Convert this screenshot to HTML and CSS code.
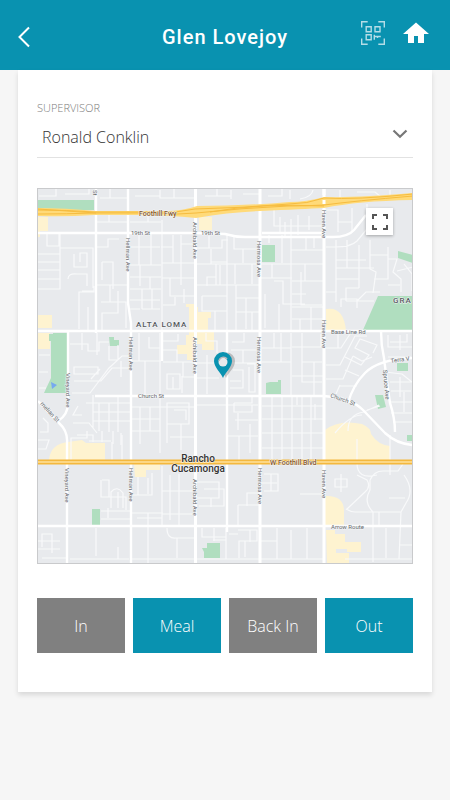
FILE: index.html
```html
<!DOCTYPE html>
<html lang="en">
<head>
<meta charset="utf-8">
<meta name="viewport" content="width=device-width, initial-scale=1">
<title>Glen Lovejoy</title>
<link rel="stylesheet" href="styles.css">
</head>
<body>
<header class="topbar">
  <button class="icon-button back" type="button" aria-label="Back">
    <svg width="14" height="22" viewBox="0 0 14 22"><path d="M12 1.5 2.5 11 12 20.5" fill="none" stroke="#fff" stroke-width="2"/></svg>
  </button>
  <h1 class="title">Glen Lovejoy</h1>
  <div class="actions">
    <button class="icon-button" type="button" aria-label="Scan code">
      <svg width="26" height="26" viewBox="0 0 26 26" fill="none" stroke="#b5dde7" stroke-width="1.4">
        <path d="M1.7 7.5V1.7h6M18.300 1.700h6v5.800M24.300 18.500v5.800h-6M7.700 24.300h-6v-5.800"/>
        <path d="M6.200 6.700h5v5h-5zM15 6.700h5v5h-5zM6.200 14.700h5v5h-5zM14.300 14.700v5M14.300 16.500h6.500M17.500 16.500v1.500"/>
      </svg>
    </button>
    <button class="icon-button" type="button" aria-label="Home">
      <svg width="26" height="22" viewBox="0 0 26 22"><path d="M13 .5 0 12h5v9h6v-7h4v7h6v-9h5z" fill="#fff"/></svg>
    </button>
  </div>
</header>
<main class="card">
  <div class="field">
    <label class="field-label" for="supervisor">SUPERVISOR</label>
    <div class="select-row">
      <select id="supervisor" class="select"><option>Ronald Conklin</option></select>
      <svg class="chevron" width="16" height="10" viewBox="0 0 16 10"><path d="m1.500 1.500 6.500 6.300 6.500-6.300" fill="none" stroke="#777" stroke-width="2.200"/></svg>
    </div>
  </div>
  <section class="map" aria-label="Map">
    <svg class="map-art" viewBox="38 189 374 374">
      <rect x="38" y="189" width="374" height="374" fill="#e8eaed"/>
      <g fill="#fef3d0">
        <path d="M38 217h10v14h-8v6h-2zM199 217h13v13h-13zM38 315h14v13H38zM38 333h12v16H38zM189 307h9v5h13v6h-3v13h6v19h-12v-6h-7v16h-8v-6h-10v-9h9v-10h3zM326 309q18-3 20 22h-20zM49 459q2-15 19-17l14-2 4 3h19v17H49zM134 464h26v6h-14v7h-11zM325 430q14-11 37-6 9 4 9 10 7 11 19 12v16h-65zM325 496q19-1 19 15v16h-19zM326 530h9v4h10v8h16v10h-14v-3h-11v4h13v11h-22zM186 307h8v-3h-8z"/>
      </g>
      <g fill="#b0debf">
        <path d="M38 200h56v10H38zM262 245h13v17h-13zM53 333h14v60H44l7-15v-37h-2v-7h4zM109 337h5v3h5v6h-9zM270 382h8v-2h3v14h-15v-11zM398 251l15 4v8l-15-5zM378 296h35v34h-50zM397 363h11v8h-11zM375 395h8l3 12-8 2zM92 509h8v16h-8zM207 543h13v15h-16v-6l-2-4h5zM407 435h6v6h-6z"/>
      </g>
      <path d="m51 382 6 3-5 4z" fill="#76a9ef"/>
      <g fill="none" stroke="#f8f9fa" stroke-width="1.200">
        <path d="M39 196h17v-7M65 194h24v-5M100 198h28M110 189v9M135 196h25M160 190v8h35M174 198v-9M205 196h12v-7M217 196h14M231 190v9M243 194h17M268 196h14v-7M290 190v9M300 199q12-2 13-9M340 199v-9M357 192h18l6 5M390 197v-7"/>
        <path d="M47 234v12h12v-12M47 246h13M38 254h22M60 248h33v40M60 234v13M60 246v43H38M38 262h22M38 270h22M38 279h22M74 254v13h13v-14h-7v9M68 279q0-6 9-5h10v12M39 289h21M79 302v-10h15v-6M79 302v27M88 307v24M94 291h-12M96 222h13v-9M109 222h19M97 247h11v-8h11M102 262h11v27M102 262v18M97 285h31M110 285v17h16v26M110 302h-9M118 291v22h-16v18"/>
        <path d="M130 222h18v-8M148 222h13M139 233v32h21M151 233v32M130 247h30M130 265h31M140 265v21M130 277h31M150 277v12h11M130 289h31M142 289v20M142 309h18M130 309h10M152 289v20M130 300h30M162 220v110M173 235v28M161 247h12M181 235v29M181 244h13M162 263h33M181 264v21M162 278h33M170 278v18h24M184 289v14M163 305h12v-8"/>
        <path d="M197 248h12v-12M209 248h13v-8h6M211 249v15M211 262h16M216 264v21h10M216 277h-9v9M220 265v20M227 235v99M196 264h64M234 235v14h9v14M243 249h17M252 264v20M235 264v20M196 285h64M202 296h25M202 296v15h13v20M215 311h12M236 285v45M236 298h24M246 298v31M236 312h24M252 312v18M269 235v8M280 217v16M291 219v111M282 235v28M261 264h31M272 264v14h20M261 278h31M274 281h9v23h22M292 294h14M265 294v34M279 304v27M291 250h15v-12M306 250h17M292 264h31M305 264v17h18M292 281h31M314 236v12M301 272v33h21M292 307h31M311 307v23M292 319h31M300 319v12"/>
        <path d="M274 209v17h50M285 222v14M298 215v20M309 216v14M326 210h12v22M338 222h14v-14M352 222v10M326 247h9q16 0 22-6l10-12V204M336 240v52M347 240v28M359 245v43M336 260h30M336 268h38M336 279h23M359 288h-13v13M326 292h10v10M346 301h28M370 240v29l6 3-3 21M370 255h18M388 247v32h-14M388 259h9l-4 13 8 7v13M397 271l16-4M388 285h12M404 264l8 10v17M341 307v-8h16v9M357 301l9-9h14"/>
        <path d="M39 355h11M39 372h9M39 388h7M70 344h18v7h11v-9h10M82 333v17M97 333v22M109 346v14h9v-15M74 367h24v7H74zM74 381h27l11-13h18M72 393h18l19-25 13-12h8M86 403h44M93 395v34M99 403v28M109 403v29M118 396v36M93 412h37M93 421h37M82 415h-9l5-9M73 423h16l8 10M77 435h16v7M40 432h8v-9l-5-5M38 440h11l-3 9h-8M121 433v12M102 442v-11M113 431v13M121 377v-16M100 369l-9 10M139 333v28h20M131 361h30M145 361v34M160 333v62M149 337v11h11"/>
        <path d="M132 407h18v24h10M140 407v37M150 407h45M160 397v56M167 403h22v21h-22zM174 410h12v10M167 424v19M181 424v26M132 419h28M132 431h28M170 437h25M163 341h15v-7M163 350h14v12h17M163 362h20v15h12M167 374h13v15h-13zM173 377v12M182 376v17M197 363h20v-8M197 378h22M207 355v39M197 405h61M227 333v129M206 333v8h11v12M232 342h12v-9M231 350h28M243 350v13h16M230 363h27M233 370h10v18h-13M247 364h8v28h-6v-25M230 381h11M234 403h18v-8M234 403v9h18v-7M235 420h23M238 413v17M228 436h30M239 436v26M250 424v29"/>
        <path d="M262 348h12v-15M262 362h29v34M273 348h18M281 333v29M291 333v62M302 333v14h19v-13M292 347h31M302 347v15h20M302 362v20h20M292 376h31M314 362v33M262 406h61M262 419h61M272 397v65M282 397v65M292 397v65M302 397v65M262 433h61M262 448h61M311 397v65M297 405v-9M315 404v16"/>
        <path d="M326 348h15l9-14M338 333v15M326 365h14l15-29h12M345 357l16 8 8-10-14-7 5-9 17 6-4 8M326 379h17l10-23M353 356l9 5 10-4M339 386h18M345 370l14 6M335 396l5-11M341 397l8 4M388 335v12h24M400 335v15M390 342h17v-8M388 357h23M390 382h22M391 391h20M400 377v20M391 402h22M404 392v20M391 413h22M385 372l17 2 10 8M393 422h19M367 410l13-4M348 431q0-17 16-19l15-7M335 433q15-18 27-18"/>
        <path d="M71 462v-24h16v-7M89 441h22M112 442v20M122 462v-27M102 480h7v17h-8v-17M106 497h20v13M111 508v-16q6-7 12 1v15M101 511h29M101 519h29M108 508v10M118 492v16M131 495h21v-22M138 477v18M148 478v16M131 513h32M137 518h25M148 513v50M42 547v-13h10v19M38 541h22M38 549h22M42 558h24M96 528v28M118 559v-12M70 559h59M131 559h64"/>
        <path d="M162 466v60M170 475v45M179 474v52M162 491h33M162 514h33M197 482h22v16h-22M204 489h20v17h-25M211 498v9M227 465v60M238 505h21M238 505v21M247 506v-13h13M264 474h14v17h-14M271 474v17M262 483h15M167 528q0 11 9 10h18M177 538v20M202 528v9h24M214 528v13M226 528v31M226 540h-13M238 530h19v11h-18v17M245 541v16M250 530v12M229 534h9M261 541h16v18M277 528v31M291 530v29M197 559h63M261 559h63M300 494h23M307 528v31M335 479h12v8h-12zM341 474v18M357 439v24q0 17 20 12M357 475l10 5q4 7-2 12M365 492l-18 17M346 509q5 3 9 3h46M370 480q4-9 13-9h15l5-7M370 480v10q-7 12 3 22M404 475q11 15 2 28l-5 9M390 435v40M373 512v50M401 512l-2 47M389 498h16M345 559h67M386 528v30M399 545h13M379 526v-14"/>
      </g>
      <g fill="none" stroke="#fff" stroke-width="2.400">
        <path d="M38 233h157l30 1q10 3 20 3h88q15 0 21-7l12-15M262 233h62M96 189v144M128 189v114l3 20v240M38 331h375M68 331v72q0 12-10 18M38 401l21 22q9 8 8 20v120M95 396h229q27 2 39 14l22 23q12 11 28 12M227 331v201M162 331v30M38 526h375M381 331q0 14 3 27 3 25 6 45 5 15 5 29M413 358q-34 1-48 15-12 12-17 30"/>
      </g>
      <path d="M195.500 189v374M260 189v374M324 189v374" fill="none" stroke="#fff" stroke-width="3"/>
      <path d="M38 208q27 0 58 3h64q20 1 37-5 46 0 92-4 18 0 35-5 33 1 89-4v7q-55 1-89 8-21 1-64 3-30 1-64 7-27-3-60-3H94q-29 2-56 1z" fill="#ffda79"/>
      <g fill="none" stroke="#f6bc3f" stroke-width="1">
        <path d="M38 210q28 0 57 2h64q18 1 36-3 47-1 94-5 18 0 35-6 32 2 89-4M38 214q28 0 57-1h65q17 2 36 0 46-5 92-7 17 0 36-1 30-4 89-9M38 209l58 4M210 212q50-9 114-6"/>
      </g>
      <path d="M324 189v6M324 200v4M324 209v10" stroke="#fff" stroke-width="3"/>
      <path d="M38 462h375" stroke="#f4b83e" stroke-width="5"/>
      <path d="M38 462h375" stroke="#ffe29c" stroke-width="1.500"/>
      <g class="street">
        <text x="131" y="235">19th St</text>
        <text x="201" y="235">19th St</text>
        <text x="138" y="398">Church St</text>
        <text x="331" y="334">Base Line Rd</text>
        <text x="331" y="529">Arrow Route</text>
        <text transform="translate(126 238) rotate(90)">Hellman Ave</text>
        <text transform="translate(129 337) rotate(90)">Hellman Ave</text>
        <text transform="translate(129 468) rotate(90)">Hellman Ave</text>
        <text transform="translate(193 222) rotate(90)">Archibald Ave</text>
        <text transform="translate(193 337) rotate(90)">Archibald Ave</text>
        <text transform="translate(193 479) rotate(90)">Archibald Ave</text>
        <text transform="translate(257 241) rotate(90)">Hermosa Ave</text>
        <text transform="translate(257 337) rotate(90)">Hermosa Ave</text>
        <text transform="translate(258 468) rotate(90)">Hermosa Ave</text>
        <text transform="translate(322 210) rotate(90)">Haven Ave</text>
        <text transform="translate(322 320) rotate(90)">Haven Ave</text>
        <text transform="translate(322 470) rotate(90)">Haven Ave</text>
        <text transform="translate(66 373) rotate(90)">Vineyard Ave</text>
        <text transform="translate(65 468) rotate(90)">Vineyard Ave</text>
        <text transform="translate(383 370) rotate(85)">Spruce Ave</text>
        <text transform="translate(40 404) rotate(48)">rnelian St</text>
        <text transform="translate(330 397) rotate(20)">Church St</text>
        <text transform="translate(391 363) rotate(-8)">Terra V</text>
        <text transform="translate(93 190) rotate(90)">St</text>
      </g>
      <g class="highway">
        <text x="139" y="216">Foothill Fwy</text>
        <text x="270" y="465">W Foothill Blvd</text>
      </g>
      <g class="district">
        <text x="136" y="327">ALTA LOMA</text>
        <text x="393" y="303">GRA</text>
      </g>
      <g class="city" text-anchor="middle">
        <text x="198" y="462">Rancho</text>
        <text x="198" y="472">Cucamonga</text>
      </g>
      <path d="M226 378c-2-5-8-10-8-17a8.500 8.500 0 0 1 17 0c0 7-7 12-9 17z" fill="#777" opacity=".4"/>
      <path d="M223 378c-2-5-9-11-9-17a9 9 0 0 1 18 0c0 6-7 12-9 17z" fill="#0992b0"/>
      <circle cx="223" cy="362" r="4.500" fill="#e9e9eb"/>
      <path d="M219 361a4.500 4.500 0 0 1 8-2" fill="none" stroke="#b9b9bc" stroke-width="1.500"/>
    </svg>
    <button class="fullscreen" type="button" aria-label="Full screen">
      <svg width="16" height="16" viewBox="0 0 16 16"><path d="M1 5V1h4M11 1h4v4M15 11v4h-4M5 15H1v-4" fill="none" stroke="#555" stroke-width="2"/></svg>
    </button>
  </section>
  <div class="punches">
    <button class="punch" type="button">In</button>
    <button class="punch primary" type="button">Meal</button>
    <button class="punch" type="button">Back In</button>
    <button class="punch primary" type="button">Out</button>
  </div>
</main>
</body>
</html>
```
FILE: styles.css
```css
* {
  box-sizing: border-box;
}

body {
  margin: 0;
  min-height: 100vh;
  background: #f6f6f6;
  color: #555;
  font-family: "Open Sans", sans-serif;
}

button {
  margin: 0;
  padding: 0;
  border: 0;
  font: inherit;
  cursor: pointer;
}

svg {
  display: block;
}

.topbar {
  display: grid;
  grid-template-columns: 1fr auto 1fr;
  align-items: center;
  height: 70px;
  padding: 4px 17px 0;
  background: #0992b0;
}

.icon-button {
  background: none;
}

.back {
  justify-self: start;
}

.title {
  margin: 0;
  color: #fff;
  font: 500 20px/24px Roboto, sans-serif;
  letter-spacing: 1px;
}

.actions {
  display: flex;
  justify-content: flex-end;
  align-items: center;
  gap: 17px;
  padding: 0 4px 8px 0;
}

.card {
  margin: 0 18px 24px;
  padding: 30px 19px 39px;
  background: #fff;
  box-shadow: 0 3px 5px rgba(0, 0, 0, 0.12);
}

.field {
  border-bottom: 1px solid #e2e2e2;
}

.field-label {
  display: block;
  color: #7c7c7c;
  font-size: 11px;
  font-weight: 300;
  line-height: 16px;
}

.select-row {
  display: grid;
  align-items: center;
}

.select {
  grid-area: 1 / 1;
  width: 100%;
  height: 41px;
  padding: 0 28px 0 5px;
  border: 0;
  background: none;
  appearance: none;
  color: #333;
  font: 300 16px/24px "Open Sans", sans-serif;
}

.chevron {
  grid-area: 1 / 1;
  justify-self: end;
  margin: 0 5px 6px 0;
  pointer-events: none;
}

.map {
  position: relative;
  margin: 30px 0 34px;
  border: 1px solid #c9cacc;
}

.map-art {
  width: 100%;
  height: auto;
  font-family: Roboto, sans-serif;
}

.map-art text {
  paint-order: stroke;
  stroke: #f5f6f7;
  stroke-width: 1px;
  stroke-linejoin: round;
}

.street {
  fill: #666a6e;
  font-size: 6px;
}

.highway {
  fill: #85551f;
  font-size: 7px;
  font-weight: 500;
}

.district {
  fill: #55595e;
  font-size: 8px;
  font-weight: 500;
  letter-spacing: 1px;
}

.city {
  fill: #333;
  font-size: 10px;
  font-weight: 500;
}

.fullscreen {
  position: absolute;
  top: 19px;
  right: 19px;
  display: grid;
  place-items: center;
  width: 27px;
  height: 27px;
  background: #fff;
  box-shadow: 0 1px 3px rgba(0, 0, 0, 0.3);
}

.punches {
  display: grid;
  grid-template-columns: repeat(4, 1fr);
  gap: 8px;
}

.punch {
  height: 55px;
  background: #808080;
  color: #fff;
  font-size: 16px;
  font-weight: 300;
}

.primary {
  background: #0992b0;
}
```
